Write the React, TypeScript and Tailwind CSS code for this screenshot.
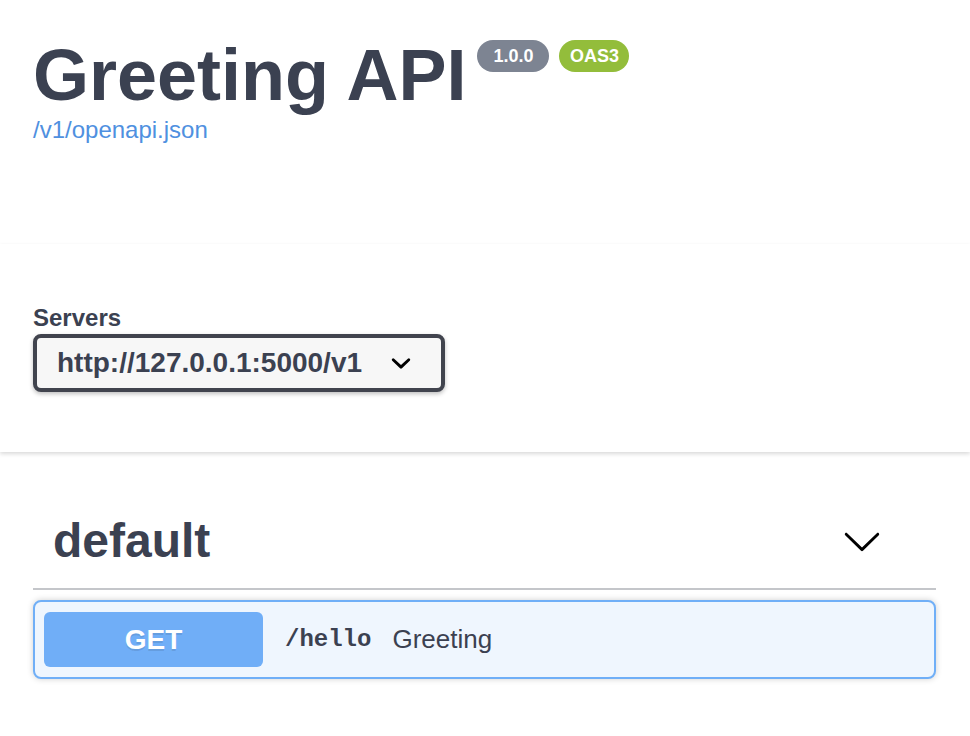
import React from 'react';

const TEXT = 'text-[#3b4151]';

function TagArrow() {
  return (
    <svg width="40" height="40" viewBox="0 0 20 20" className="shrink-0">
      <path
        fill="#000"
        d="M17.418 6.109c.272-.268.709-.268.979 0s.271.701 0 .969l-7.908 7.83c-.27.268-.707.268-.979 0l-7.908-7.83c-.27-.268-.27-.701 0-.969.271-.268.709-.268.979 0L10 13.25l7.418-7.141z"
      />
    </svg>
  );
}

function SelectArrow() {
  return (
    <svg width="40" height="40" viewBox="0 0 20 20" className="shrink-0">
      <path
        fill="#000"
        d="M13.418 7.859a.695.695 0 01.978 0 .68.68 0 010 .969l-3.908 3.83a.697.697 0 01-.979 0l-3.908-3.83a.68.68 0 010-.969.695.695 0 01.978 0L10 11l3.418-3.141z"
      />
    </svg>
  );
}

export default function App() {
  return (
    <div className="min-h-screen bg-white font-['Liberation_Sans',Arial,sans-serif]">
      {/* Info */}
      <div className="px-[33px] pt-[39px] pb-[102px]">
        <div className="flex items-start">
          <h1 className={`text-[72px] leading-[72px] font-bold ${TEXT}`}>Greeting API</h1>
          <span className="ml-[11px] mt-px flex h-[32px] w-[72px] items-center justify-center rounded-full bg-[#7d8492] text-[18px] font-bold text-white">
            1.0.0
          </span>
          <span className="ml-[10px] mt-px flex h-[32px] w-[70px] items-center justify-center rounded-full bg-[#93bd3b] text-[18px] font-bold text-white">
            OAS3
          </span>
        </div>
        <a className="mt-[7px] block text-[24px] leading-[24px] text-[#4f90e0]">/v1/openapi.json</a>
      </div>

      {/* Servers */}
      <div className="bg-white py-[60px] shadow-[0_2px_4px_0_rgba(0,0,0,0.15)]">
        <div className="px-[33px]">
          <div className={`h-[29px] text-[24px] leading-[28px] font-bold ${TEXT}`}>Servers</div>
          <div className="mt-px flex h-[58px] w-[412px] items-center rounded-lg border-4 border-[#41444e] bg-[#f7f7f7] pl-5 pr-5 shadow-[0_2px_4px_0_rgba(0,0,0,0.25)]">
            <span className={`text-[28px] font-bold ${TEXT}`}>http://127.0.0.1:5000/v1</span>
            <span className="ml-auto">
              <SelectArrow />
            </span>
          </div>
        </div>
      </div>

      {/* Tag section */}
      <div className="ml-[33px] mr-[34px] mt-[41px]">
        <div className="flex items-center border-b-2 border-[rgba(59,65,81,0.3)] py-5 pl-5 pr-[54px]">
          <h3 className={`text-[48px] leading-[55px] font-bold ${TEXT}`}>default</h3>
          <span className="ml-auto flex">
            <TagArrow />
          </span>
        </div>

        <div className="mt-[10px] rounded-lg border-2 border-[#70aff7] bg-[#eff6fe] py-[10px] pl-[9px] pr-[9px] shadow-[0_0_6px_rgba(0,0,0,0.19)]">
          <div className="flex items-center">
            <span className="flex h-[55px] w-[219px] items-center justify-center rounded-md bg-[#70aef7] text-[28px] font-bold text-white [text-shadow:0_2px_0_rgba(0,0,0,0.1)]">
              GET
            </span>
            <span className={`ml-[22px] font-['Liberation_Mono',monospace] text-[24px] font-bold ${TEXT}`}>
              /hello
            </span>
            <span className={`ml-[21px] text-[26px] ${TEXT}`}>Greeting</span>
          </div>
        </div>
      </div>
    </div>
  );
}
